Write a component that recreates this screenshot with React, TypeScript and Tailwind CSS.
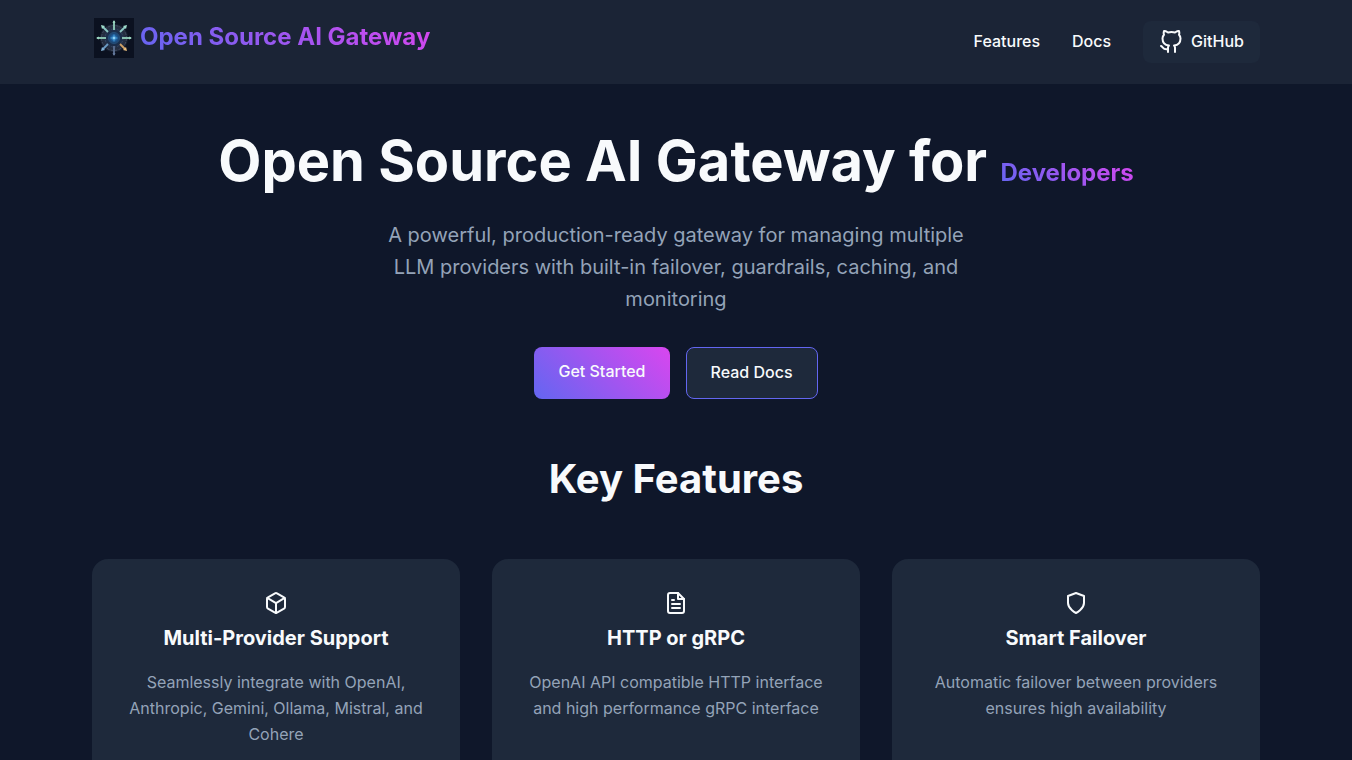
import { FiBox, FiFileText, FiGithub, FiShield } from 'react-icons/fi';

const features = [
  {
    icon: FiBox,
    title: 'Multi-Provider Support',
    description: 'Seamlessly integrate with OpenAI, Anthropic, Gemini, Ollama, Mistral, and Cohere',
  },
  {
    icon: FiFileText,
    title: 'HTTP or gRPC',
    description: 'OpenAI API compatible HTTP interface and high performance gRPC interface',
  },
  {
    icon: FiShield,
    title: 'Smart Failover',
    description: 'Automatic failover between providers ensures high availability',
  },
];

function Logo() {
  return (
    <svg className="w-10 h-10" viewBox="0 0 40 40" fill="none" aria-hidden="true">
      <defs>
        <radialGradient id="core">
          <stop offset="0" stopColor="#5cb4ea" />
          <stop offset="0.2" stopColor="#1f5f9e" />
          <stop offset="0.45" stopColor="#1a2f4e" />
          <stop offset="0.8" stopColor="#252d3f" />
          <stop offset="1" stopColor="#151d2e" />
        </radialGradient>
      </defs>
      <rect width="40" height="40" fill="#0b1120" />
      <circle cx="20" cy="20" r="14" fill="url(#core)" />
      <circle cx="20" cy="20" r="12.5" stroke="#475468" strokeWidth="0.8" strokeDasharray="3 1" />
      <circle cx="20" cy="20" r="9" stroke="#3f4f6a" strokeWidth="0.7" strokeDasharray="2 1" />
      <circle cx="20" cy="20" r="5.5" stroke="#2c5c88" strokeWidth="0.6" />
      {/* Straight arrows */}
      <path d="M20 12V3M28 20h9M12 20H3" stroke="#86bfae" strokeWidth="2" />
      <path d="M18.500 5L20 2l1.500 3zM35 18.500l3 1.500-3 1.500zM5 18.500L2 20l3 1.500z" fill="#9ad4be" />
      <path d="M20 28v9" stroke="#56698a" strokeWidth="2" />
      <path d="M18.500 35l1.500 3 1.500-3z" fill="#63789a" />
      {/* Diagonal arrows */}
      <path d="M14 14L9 9M26 14l5-5" stroke="#8cc8c4" strokeWidth="1.8" />
      <path d="M7 7l4 1L8 11zM33 7l-1 4L29 8z" fill="#9fdccb" />
      <path d="M14 26l-5 5" stroke="#6a9bc4" strokeWidth="1.8" />
      <path d="M7 33l1-4 3 3z" fill="#83b2d6" />
      <path d="M26 26l5 5" stroke="#cfa066" strokeWidth="1.8" />
      <path d="M33 33l-4-1 3-3z" fill="#e8bd7c" />
      <path d="M20 16.500v7M16.500 20h7" stroke="#4fa9df" strokeWidth="0.8" />
      <circle cx="20" cy="20" r="1.2" fill="#8fd0f5" />
    </svg>
  );
}

function Header() {
  return (
    <header className="bg-[#1b2436]">
      <div className="max-w-[1200px] mx-auto px-4 py-[18px] flex items-start justify-between">
        <a href="#" className="flex items-start gap-1.5 pl-0.5 pb-2">
          <Logo />
          <span className="text-2xl leading-[38px] font-bold bg-[linear-gradient(45deg,#6366f1,#d946ef)] bg-clip-text text-transparent">
            Open Source AI Gateway
          </span>
        </a>
        <nav className="flex gap-8 pt-[3px] font-medium leading-6">
          <a href="#features" className="pt-2 pb-2.5">Features</a>
          <a href="#docs" className="pt-2 pb-2.5">Docs</a>
          <a href="#github" className="flex items-start gap-2 rounded-lg bg-[#1e293b] px-4 py-[9px] leading-[22px]">
            <FiGithub className="w-6 h-6" />
            GitHub
          </a>
        </nav>
      </div>
    </header>
  );
}

export default function App() {
  return (
    <div className="h-screen overflow-hidden bg-[#0f172a] text-[#f8fafc] font-['Inter',sans-serif]">
      <Header />

      <main className="max-w-[1200px] mx-auto px-4">
        {/* Hero */}
        <section className="pt-8 text-center">
          <h1 className="text-[56px] leading-[90px] font-bold">
            Open Source AI Gateway for{' '}
            <span className="text-2xl bg-[linear-gradient(45deg,#6366f1,#d946ef)] bg-clip-text text-transparent">
              Developers
            </span>
          </h1>
          <p className="max-w-[600px] mx-auto mt-[13px] text-xl leading-8 text-[#94a3b8]">
            A powerful, production-ready gateway for managing multiple LLM providers with built-in failover,
            guardrails, caching, and monitoring
          </p>
          <div className="mt-8 flex justify-center gap-4 font-medium leading-6">
            <a
              href="#get-started"
              className="rounded-lg bg-[linear-gradient(45deg,#6366f1,#d946ef)] px-6 pt-3 pb-4"
            >
              Get Started
            </a>
            <a href="#docs" className="rounded-lg border border-[#6366f1] bg-[#1e293b] px-6 pt-3 pb-3.5">
              Read Docs
            </a>
          </div>
        </section>

        {/* Features */}
        <section id="features" className="pt-12">
          <h2 className="text-center text-[40px] leading-[64px] font-bold">Key Features</h2>
          <div className="mt-12 grid grid-cols-3 gap-8">
            {features.map(({ icon: Icon, title, description }) => (
              <article key={title} className="rounded-2xl bg-[#1e293b] p-8 text-center">
                <Icon className="w-6 h-6 mx-auto" />
                <h3 className="mt-2 text-xl leading-[30px] font-bold">{title}</h3>
                <p className="mt-4 leading-[26px] text-[#94a3b8]">{description}</p>
              </article>
            ))}
          </div>
        </section>
      </main>
    </div>
  );
}
